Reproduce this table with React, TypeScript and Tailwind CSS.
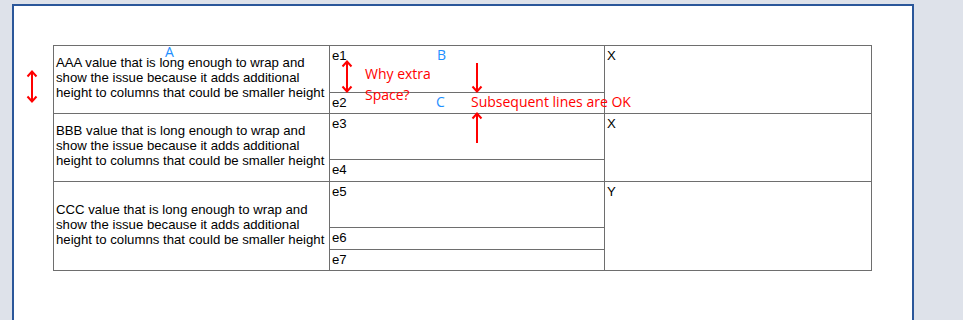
import React from "react";

const cellFont = { fontFamily: '"Liberation Sans", Arial, sans-serif' };

function DoubleArrow({ h }: { h: number }) {
  return (
    <svg width="12" height={h} viewBox={`0 0 12 ${h}`} fill="none" stroke="#ff0000" strokeWidth="2">
      <path d={`M6 1 V${h - 1}`} />
      <path d="M1.5 6.5 L6 1.5 L10.5 6.5" />
      <path d={`M1.5 ${h - 6.5} L6 ${h - 1.5} L10.5 ${h - 6.5}`} />
    </svg>
  );
}

function DownArrow({ h }: { h: number }) {
  return (
    <svg width="12" height={h} viewBox={`0 0 12 ${h}`} fill="none" stroke="#ff0000" strokeWidth="2">
      <path d={`M6 0 V${h - 1}`} />
      <path d={`M1.5 ${h - 6.5} L6 ${h - 1.5} L10.5 ${h - 6.5}`} />
    </svg>
  );
}

function UpArrow({ h }: { h: number }) {
  return (
    <svg width="12" height={h} viewBox={`0 0 12 ${h}`} fill="none" stroke="#ff0000" strokeWidth="2">
      <path d={`M6 1 V${h}`} />
      <path d="M1.5 6.5 L6 1.5 L10.5 6.5" />
    </svg>
  );
}

const longText = "value that is long enough to wrap and show the issue because it adds additional height to columns that could be smaller height";

function Group({
  label,
  subs,
  third,
}: {
  label: string;
  subs: { t: string; h: number }[];
  third: string;
}) {
  return (
    <div className="flex">
      <div className="w-[276px] shrink-0 border-r border-b border-[#6e6e6e] flex items-center pl-[2px] pr-0 pb-[4px]">
        <div className="text-[13.2px] leading-[15px] text-black">
          {label} {longText}
        </div>
      </div>
      <div className="w-[275px] shrink-0 flex flex-col">
        {subs.map((s) => (
          <div
            key={s.t}
            className="border-r border-b border-[#6e6e6e] pl-[2px] pt-[2px] text-[13.2px] leading-[15px] text-black"
            style={{ height: s.h }}
          >
            {s.t}
          </div>
        ))}
      </div>
      <div className="w-[267px] shrink-0 border-r border-b border-[#6e6e6e] pl-[2px] pt-[2px] text-[13.2px] leading-[15px] text-black">
        {third}
      </div>
    </div>
  );
}

export default function App() {
  const ann = { fontFamily: '"Open Sans", "Noto Sans", sans-serif' };
  return (
    <div className="relative h-[320px] w-[963px] overflow-hidden bg-[#dee2ea]" style={cellFont}>
      <div className="ml-[12px] pt-[4px]">
        <div className="h-[316px] w-[902px] border-2 border-b-0 border-[#2b579a] bg-white">
          <div className="ml-[39px] mt-[39px] w-[819px] border-l border-t border-[#6e6e6e]">
            <Group
              label="AAA"
              subs={[
                { t: "e1", h: 47 },
                { t: "e2", h: 21 },
              ]}
              third="X"
            />
            <Group
              label="BBB"
              subs={[
                { t: "e3", h: 46 },
                { t: "e4", h: 22 },
              ]}
              third="X"
            />
            <Group
              label="CCC"
              subs={[
                { t: "e5", h: 46 },
                { t: "e6", h: 22 },
                { t: "e7", h: 21 },
              ]}
              third="Y"
            />
          </div>
        </div>
      </div>

      {/* annotations drawn over the table */}
      <div className="absolute left-[165px] top-[45px] text-[14px] leading-[14px] text-[#1e8fff]" style={ann}>A</div>
      <div className="absolute left-[437px] top-[48px] text-[14px] leading-[14px] text-[#1e8fff]" style={ann}>B</div>
      <div className="absolute left-[436px] top-[95px] text-[14px] leading-[14px] text-[#1e8fff]" style={ann}>C</div>

      <div className="absolute left-[26px] top-[70px]"><DoubleArrow h={33} /></div>
      <div className="absolute left-[341px] top-[60px]"><DoubleArrow h={33} /></div>

      <div className="absolute left-[365px] top-[63px] text-[14px] leading-[21px] text-[#ff0000]" style={ann}>
        <div>Why extra</div>
        <div>Space?</div>
      </div>

      <div className="absolute left-[471px] top-[63px]"><DownArrow h={30} /></div>
      <div className="absolute left-[471px] top-[112px]"><UpArrow h={31} /></div>

      <div className="absolute left-[471px] top-[95px] whitespace-nowrap text-[14px] leading-[14px] text-[#ff0000]" style={ann}>
        Subsequent lines are OK
      </div>
    </div>
  );
}
